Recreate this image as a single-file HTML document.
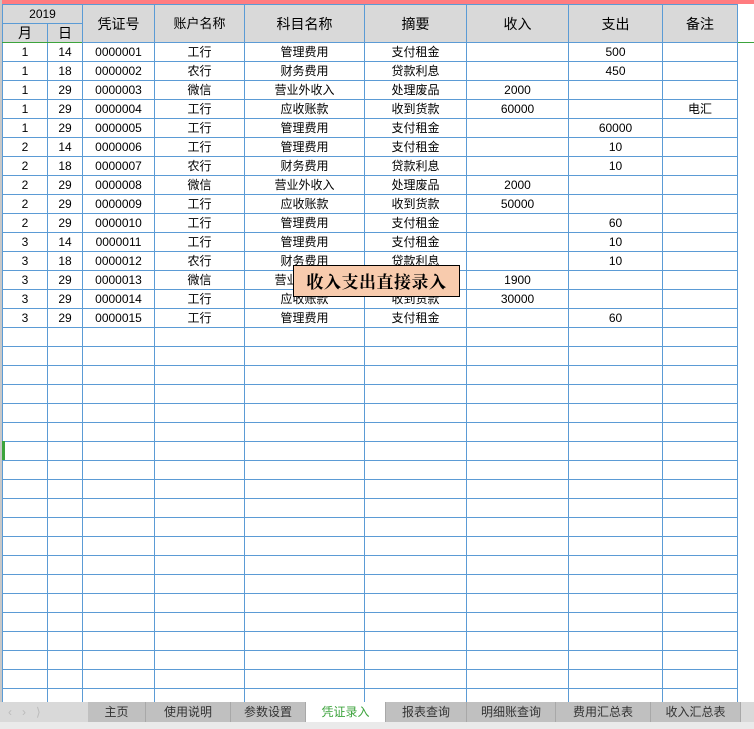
<!DOCTYPE html>
<html><head><meta charset="utf-8"><style>
body{margin:0;width:754px;height:729px;overflow:hidden;background:#fff;position:relative;font-family:"Liberation Sans","Noto Sans CJK SC",sans-serif;}
.pink{position:absolute;left:0;top:0;width:754px;height:4px;background:#ff7c80;}
.lg{position:absolute;left:0;top:0;width:2px;height:702px;background:#c8c8c8;}
.hg{position:absolute;left:2px;top:4px;width:735px;height:38px;background:#d9d9d9;}
.gl{position:absolute;left:737px;top:42px;width:17px;height:1px;background:#3ca33c;}
table{position:absolute;left:2px;top:4px;border-collapse:collapse;table-layout:fixed;}
td{border:1px solid #5b9bd5;height:18px;padding:0;text-align:center;font-size:12px;color:#000;white-space:nowrap;overflow:hidden;line-height:18px;}
tr.h td{font-size:14px;}
tr.h2 td{border-bottom:1px solid #3ca33c;}
.pop{position:absolute;left:293px;top:265px;width:165px;height:30px;background:#f8cbad;border:1px solid #000;font-family:"Noto Serif CJK SC","Liberation Serif",serif;font-size:17px;font-weight:bold;line-height:30px;text-align:center;letter-spacing:0.5px;}
.tabs{position:absolute;left:0;top:702px;width:754px;height:20px;background:#d9d9d9;}
.tab{position:absolute;top:0;height:20px;background:#c0c0c0;border-right:1px solid #a8a8a8;font-size:12px;line-height:20px;text-align:center;color:#333;}
.bot{position:absolute;left:0;top:722px;width:754px;height:7px;background:#eaeaea;}
.gm{position:absolute;left:2px;top:441px;width:3px;height:19px;background:#3ca33c;}
</style></head><body>
<div class="pink"></div><div class="lg"></div><div class="hg"></div><div class="gl"></div>
<table>
<colgroup><col style="width:45px"><col style="width:35px"><col style="width:72px"><col style="width:90px"><col style="width:120px"><col style="width:102px"><col style="width:102px"><col style="width:94px"><col style="width:75px"></colgroup>
<tr class="h"><td colspan="2" style="font-size:12px">2019</td><td rowspan="2">凭证号</td><td rowspan="2" style="font-size:13px">账户名称</td><td rowspan="2">科目名称</td><td rowspan="2">摘要</td><td rowspan="2">收入</td><td rowspan="2">支出</td><td rowspan="2">备注</td></tr>
<tr class="h h2"><td>月</td><td>日</td></tr>
<tr><td>1</td><td>14</td><td>0000001</td><td>工行</td><td>管理费用</td><td>支付租金</td><td></td><td>500</td><td></td></tr>
<tr><td>1</td><td>18</td><td>0000002</td><td>农行</td><td>财务费用</td><td>贷款利息</td><td></td><td>450</td><td></td></tr>
<tr><td>1</td><td>29</td><td>0000003</td><td>微信</td><td>营业外收入</td><td>处理废品</td><td>2000</td><td></td><td></td></tr>
<tr><td>1</td><td>29</td><td>0000004</td><td>工行</td><td>应收账款</td><td>收到货款</td><td>60000</td><td></td><td>电汇</td></tr>
<tr><td>1</td><td>29</td><td>0000005</td><td>工行</td><td>管理费用</td><td>支付租金</td><td></td><td>60000</td><td></td></tr>
<tr><td>2</td><td>14</td><td>0000006</td><td>工行</td><td>管理费用</td><td>支付租金</td><td></td><td>10</td><td></td></tr>
<tr><td>2</td><td>18</td><td>0000007</td><td>农行</td><td>财务费用</td><td>贷款利息</td><td></td><td>10</td><td></td></tr>
<tr><td>2</td><td>29</td><td>0000008</td><td>微信</td><td>营业外收入</td><td>处理废品</td><td>2000</td><td></td><td></td></tr>
<tr><td>2</td><td>29</td><td>0000009</td><td>工行</td><td>应收账款</td><td>收到货款</td><td>50000</td><td></td><td></td></tr>
<tr><td>2</td><td>29</td><td>0000010</td><td>工行</td><td>管理费用</td><td>支付租金</td><td></td><td>60</td><td></td></tr>
<tr><td>3</td><td>14</td><td>0000011</td><td>工行</td><td>管理费用</td><td>支付租金</td><td></td><td>10</td><td></td></tr>
<tr><td>3</td><td>18</td><td>0000012</td><td>农行</td><td>财务费用</td><td>贷款利息</td><td></td><td>10</td><td></td></tr>
<tr><td>3</td><td>29</td><td>0000013</td><td>微信</td><td>营业外收入</td><td>处理废品</td><td>1900</td><td></td><td></td></tr>
<tr><td>3</td><td>29</td><td>0000014</td><td>工行</td><td>应收账款</td><td>收到货款</td><td>30000</td><td></td><td></td></tr>
<tr><td>3</td><td>29</td><td>0000015</td><td>工行</td><td>管理费用</td><td>支付租金</td><td></td><td>60</td><td></td></tr>
<tr><td></td><td></td><td></td><td></td><td></td><td></td><td></td><td></td><td></td></tr>
<tr><td></td><td></td><td></td><td></td><td></td><td></td><td></td><td></td><td></td></tr>
<tr><td></td><td></td><td></td><td></td><td></td><td></td><td></td><td></td><td></td></tr>
<tr><td></td><td></td><td></td><td></td><td></td><td></td><td></td><td></td><td></td></tr>
<tr><td></td><td></td><td></td><td></td><td></td><td></td><td></td><td></td><td></td></tr>
<tr><td></td><td></td><td></td><td></td><td></td><td></td><td></td><td></td><td></td></tr>
<tr><td></td><td></td><td></td><td></td><td></td><td></td><td></td><td></td><td></td></tr>
<tr><td></td><td></td><td></td><td></td><td></td><td></td><td></td><td></td><td></td></tr>
<tr><td></td><td></td><td></td><td></td><td></td><td></td><td></td><td></td><td></td></tr>
<tr><td></td><td></td><td></td><td></td><td></td><td></td><td></td><td></td><td></td></tr>
<tr><td></td><td></td><td></td><td></td><td></td><td></td><td></td><td></td><td></td></tr>
<tr><td></td><td></td><td></td><td></td><td></td><td></td><td></td><td></td><td></td></tr>
<tr><td></td><td></td><td></td><td></td><td></td><td></td><td></td><td></td><td></td></tr>
<tr><td></td><td></td><td></td><td></td><td></td><td></td><td></td><td></td><td></td></tr>
<tr><td></td><td></td><td></td><td></td><td></td><td></td><td></td><td></td><td></td></tr>
<tr><td></td><td></td><td></td><td></td><td></td><td></td><td></td><td></td><td></td></tr>
<tr><td></td><td></td><td></td><td></td><td></td><td></td><td></td><td></td><td></td></tr>
<tr><td></td><td></td><td></td><td></td><td></td><td></td><td></td><td></td><td></td></tr>
<tr><td></td><td></td><td></td><td></td><td></td><td></td><td></td><td></td><td></td></tr>
<tr><td></td><td></td><td></td><td></td><td></td><td></td><td></td><td></td><td></td></tr>
</table>
<div class="gm"></div>
<div class="pop">收入支出直接录入</div>
<div class="tabs">
<div style="position:absolute;left:8px;top:0;font-size:12px;line-height:20px;color:#bbb;letter-spacing:10px">‹›⟩</div>
<div class="tab" style="left:88px;width:57px">主页</div>
<div class="tab" style="left:146px;width:84px">使用说明</div>
<div class="tab" style="left:231px;width:74px">参数设置</div>
<div class="tab" style="left:306px;width:79px;background:#fff;color:#3ca33c">凭证录入</div>
<div class="tab" style="left:386px;width:80px">报表查询</div>
<div class="tab" style="left:467px;width:88px">明细账查询</div>
<div class="tab" style="left:556px;width:94px">费用汇总表</div>
<div class="tab" style="left:651px;width:89px">收入汇总表</div>
</div>
<div class="bot"></div>
</body></html>
